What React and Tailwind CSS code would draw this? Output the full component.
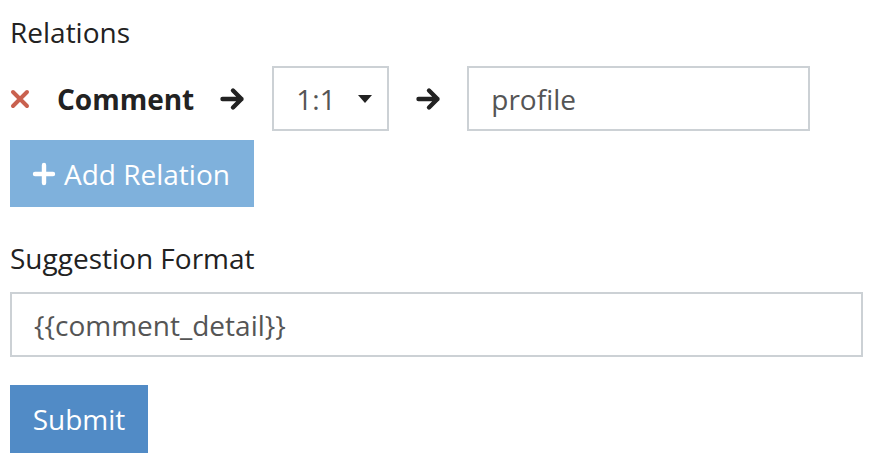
import React from 'react';

function ArrowRight() {
  return (
    <svg width="26" height="24" viewBox="0 0 26 24" className="shrink-0">
      <path
        d="M2.5 12 H21.5 M13 3.5 L21.5 12 L13 20.5"
        fill="none"
        stroke="#222"
        strokeWidth="4.4"
        strokeLinecap="round"
        strokeLinejoin="round"
      />
    </svg>
  );
}

function CrossIcon() {
  return (
    <svg width="20" height="20" viewBox="0 0 20 20" className="shrink-0">
      <path
        d="M3 3 L17 17 M17 3 L3 17"
        fill="none"
        stroke="#c9614f"
        strokeWidth="4"
        strokeLinecap="round"
      />
    </svg>
  );
}

function PlusIcon() {
  return (
    <svg width="24" height="24" viewBox="0 0 24 24" className="shrink-0">
      <path
        d="M12 3 V21 M3 12 H21"
        fill="none"
        stroke="#fff"
        strokeWidth="4.4"
        strokeLinecap="round"
      />
    </svg>
  );
}

export default function App() {
  return (
    <div className="min-h-screen bg-white pl-[10px] pt-[12px] font-['Open_Sans',sans-serif] text-[28px] text-[#222]">
      {/* Relations */}
      <div className="leading-[40px]">Relations</div>

      <div className="mt-[14px] flex items-center">
        <CrossIcon />
        <span className="ml-[27px] font-bold text-[#222]">Comment</span>
        <div className="ml-[26px]">
          <ArrowRight />
        </div>
        <div className="ml-[26px] flex h-[65px] w-[117px] items-center justify-between border-2 border-[#ccd1d5] pl-[22px] pr-[15px] text-[#555]">
          <span>1:1</span>
          <svg width="14" height="8" viewBox="0 0 14 8">
            <path d="M0 0 H14 L7 8 Z" fill="#222" />
          </svg>
        </div>
        <div className="ml-[27px]">
          <ArrowRight />
        </div>
        <div className="ml-[25px] flex h-[65px] w-[343px] items-center border-2 border-[#ccd1d5] pl-[22px] text-[#555]">
          profile
        </div>
      </div>

      <button className="mt-[9px] flex h-[67px] items-center gap-[8px] bg-[#7fb1dc] pl-[22px] pr-[24px] text-white">
        <PlusIcon />
        <span>Add Relation</span>
      </button>

      {/* Suggestion format */}
      <div className="mt-[31px] leading-[40px]">Suggestion Format</div>
      <div className="mt-[14px] flex h-[65px] w-[853px] items-center border-2 border-[#ccd1d5] pl-[22px] text-[#555]">
        {'{{comment_detail}}'}
      </div>

      <button className="mt-[28px] flex h-[68px] w-[138px] items-center justify-center bg-[#518bc6] text-white">
        Submit
      </button>
    </div>
  );
}
